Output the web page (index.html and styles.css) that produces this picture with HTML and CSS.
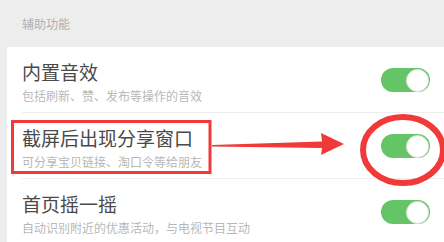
FILE: index.html
```html
<!DOCTYPE html>
<html lang="zh-CN">
<head>
<meta charset="utf-8">
<title>辅助功能</title>
<link rel="stylesheet" href="styles.css">
</head>
<body>
<div class="page">
  <div class="section-header">辅助功能</div>
  <div class="list">
    <div class="row">
      <div class="text">
        <div class="title">内置音效</div>
        <div class="desc">包括刷新、赞、发布等操作的音效</div>
      </div>
      <span class="switch"><span class="knob"></span></span>
    </div>
    <div class="row">
      <div class="text">
        <div class="title">截屏后出现分享窗口</div>
        <div class="desc">可分享宝贝链接、淘口令等给朋友</div>
      </div>
      <span class="switch"><span class="knob"></span></span>
    </div>
    <div class="row">
      <div class="text">
        <div class="title">首页摇一摇</div>
        <div class="desc">自动识别附近的优惠活动，与电视节目互动</div>
      </div>
      <span class="switch"><span class="knob"></span></span>
    </div>
  </div>
  <svg class="annot" width="444" height="242" viewBox="0 0 444 242" xmlns="http://www.w3.org/2000/svg">
    <rect x="12.5" y="121.5" width="197.5" height="51" fill="none" stroke="#f03a3a" stroke-width="3"/>
    <polygon points="212,145 322,141.5 321,133 344,144 321,155 322,148 212,146.5" fill="#f03a3a"/>
    <ellipse cx="403" cy="150" rx="40" ry="33" fill="none" stroke="#f03a3a" stroke-width="6"/>
  </svg>
</div>
</body>
</html>
```

FILE: styles.css
```css
html, body {
  margin: 0;
  padding: 0;
}
body {
  background: #ededed;
  font-family: "Noto Sans CJK SC", "Noto Sans", sans-serif;
}
.page {
  position: relative;
  width: 444px;
  height: 242px;
  overflow: hidden;
  background: #ededed;
}
.section-header {
  height: 47px;
  display: flex;
  align-items: center;
  padding-left: 22px;
  font-size: 12px;
  color: #b0b0b0;
}
.list {
  margin-left: 7px;
  background: #ffffff;
}
.row {
  margin-left: 15px;
  padding: 14px 14px 9px 0;
  border-bottom: 1px solid #eeeeee;
  display: flex;
  align-items: center;
  justify-content: space-between;
}
.text {
  display: flex;
  flex-direction: column;
  gap: 6px;
  white-space: nowrap;
}
.title {
  font-size: 19px;
  line-height: 22px;
  color: #4a4a4a;
}
.desc {
  font-size: 12px;
  line-height: 14px;
  color: #b8b8b8;
}
.switch {
  position: relative;
  flex: none;
  width: 49px;
  height: 24px;
  border-radius: 12px;
  background: #65c466;
  margin-top: -5px;
}
.knob {
  position: absolute;
  right: 1px;
  top: 1px;
  width: 21px;
  height: 21px;
  border-radius: 50%;
  background: #ffffff;
  border: 0.5px solid #d8e8d8;
}
.annot {
  position: absolute;
  left: 0;
  top: 0;
  pointer-events: none;
}
```
